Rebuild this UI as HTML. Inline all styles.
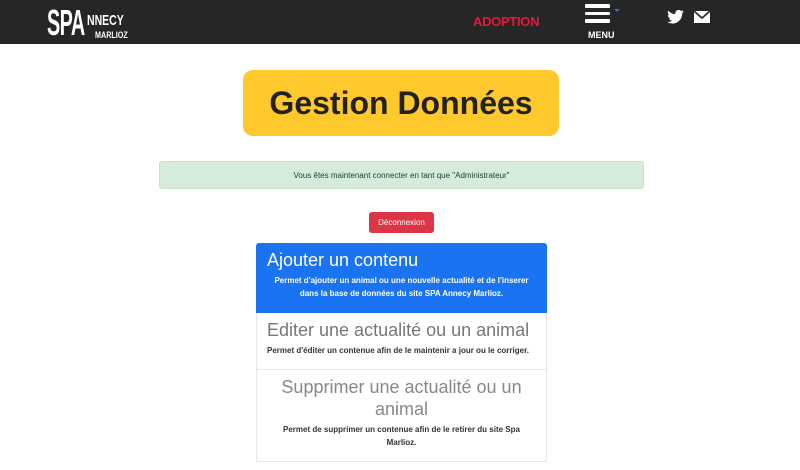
<!DOCTYPE html>
<html><head><meta charset="utf-8"><style>
*{box-sizing:border-box;margin:0;padding:0}
body{width:800px;height:470px;overflow:hidden;background:#fff;font-family:"Liberation Sans",sans-serif;position:relative}
.nav{position:absolute;left:0;top:0;width:800px;height:44px;background:#262626}
.logo{position:absolute;left:47px;top:4px;width:90px;height:70px;color:#fff;font-weight:bold}
.ad{position:absolute;left:473px;top:14px;color:#e8173f;font-weight:bold;font-size:13px;letter-spacing:-0.3px}
.bars{position:absolute;left:585px;top:4px}
.bars div{width:25px;height:3.5px;background:#fff;margin-bottom:4px;border-radius:1px}
.menu{position:absolute;left:588px;top:30px;color:#fff;font-size:9px;font-weight:bold}
.title{position:absolute;left:243px;top:70px;width:316px;height:66px;background:#ffc82c;border-radius:10px;text-align:center;font-size:32px;font-weight:bold;line-height:66px;color:#222}
.alert{position:absolute;left:159px;top:161px;width:485px;height:28px;background:#d5ecdb;border:1px solid #c4e4cc;border-radius:3px;font-size:8px;text-align:center;line-height:27px;color:#1c3e26}
.btn{position:absolute;left:369px;top:212px;width:65px;height:21px;background:#dc3545;border-radius:3px;color:#fff;font-size:8px;text-align:center;line-height:21px}
.list{position:absolute;left:256px;top:243px;width:291px}
.it{border:1px solid #e6e6e6;border-top:none;padding:6px 10px;font-size:8px;font-weight:bold;color:#333;line-height:13px}
.it h2{font-weight:300;font-size:18px;line-height:22px;color:#777}
.a{background:#1a73f0;border-color:#1a73f0;color:#fff;height:70px;border-radius:3px 3px 0 0;text-align:center}
.a h2{color:#fff;text-align:left;margin-bottom:3px}
</style></head><body>
<div class="nav">
<div class="logo">
<div style="position:absolute;left:0;top:-2px;font-size:36px;transform:scaleX(0.55);transform-origin:left top;letter-spacing:-1px">SPA</div>
<div style="position:absolute;left:40px;top:8px;font-size:15px;transform:scaleX(0.7);transform-origin:left top">NNECY</div>
<div style="position:absolute;left:48px;top:26px;font-size:9px;transform:scaleX(0.8);transform-origin:left top">MARLIOZ</div>
</div>
<div class="ad">ADOPTION</div>
<div class="bars"><div></div><div></div><div></div></div>
<div style="position:absolute;left:614px;top:9px;width:0;height:0;border-left:3px solid transparent;border-right:3px solid transparent;border-top:3px solid #1a73f0"></div>
<div class="menu">MENU</div>
<svg style="position:absolute;left:667px;top:10px" width="17" height="14" viewBox="0 0 24 20"><path fill="#fff" d="M24 2.4a10 10 0 0 1-2.8.8A5 5 0 0 0 23.3.4a10 10 0 0 1-3.1 1.2A4.9 4.9 0 0 0 11.8 6 14 14 0 0 1 1.7.9a4.9 4.9 0 0 0 1.5 6.6A4.9 4.9 0 0 1 1 6.9a4.9 4.9 0 0 0 3.9 4.8 5 5 0 0 1-2.2.1 4.9 4.9 0 0 0 4.6 3.4A9.9 9.9 0 0 1 0 17.2 14 14 0 0 0 7.5 19.4c9 0 14-7.5 14-14v-.6A10 10 0 0 0 24 2.4z"/></svg>
<svg style="position:absolute;left:694px;top:11px" width="16" height="12" viewBox="0 0 16 12"><rect width="16" height="12" fill="#fff"/><path d="M0 0l8 7 8-7" stroke="#262626" stroke-width="1.6" fill="none"/></svg>
</div>
<div class="title">Gestion Données</div>
<div class="alert">Vous êtes maintenant connecter en tant que "Administrateur"</div>
<div class="btn">Déconnexion</div>
<div class="list">
<div class="it a"><h2>Ajouter un contenu</h2>Permet d'ajouter un animal ou une nouvelle actualité et de l'inserer dans la base de données du site SPA Annecy Marlioz.</div>
<div class="it" style="height:57px;padding-top:6px"><h2 style="margin-bottom:3px">Editer une actualité ou un animal</h2>Permet d'éditer un contenue afin de le maintenir a jour ou le corriger.</div>
<div class="it" style="text-align:center;height:92px;padding:6px 22px"><h2 style="color:#888;margin-bottom:3px">Supprimer une actualité ou un animal</h2>Permet de supprimer un contenue afin de le retirer du site Spa Marlioz.</div>
</div>
</body></html>
